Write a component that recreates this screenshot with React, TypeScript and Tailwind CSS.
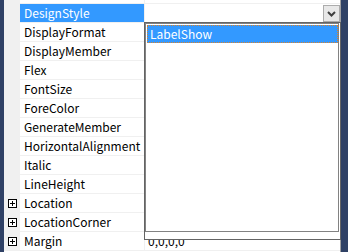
import React from 'react'

type Prop = { name: string; value?: string; expandable?: boolean; selected?: boolean; dropdown?: boolean }

// first row is scrolled almost fully out of view; only its bottom line shows
const props: Prop[] = [
  { name: '' },
  { name: 'DesignStyle', selected: true, dropdown: true },
  { name: 'DisplayFormat' },
  { name: 'DisplayMember' },
  { name: 'Flex' },
  { name: 'FontSize' },
  { name: 'ForeColor' },
  { name: 'GenerateMember' },
  { name: 'HorizontalAlignment' },
  { name: 'Italic' },
  { name: 'LineHeight' },
  { name: 'Location', expandable: true },
  { name: 'LocationCorner', expandable: true },
  { name: 'Margin', expandable: true, value: '0,0,0,0' },
]

function PlusBox() {
  return (
    <svg width="9" height="9" viewBox="0 0 9 9" className="ml-[4px]" shapeRendering="crispEdges">
      <rect x="0.5" y="0.5" width="8" height="8" fill="#ffffff" stroke="#000000" />
      <line x1="2" y1="4.5" x2="7" y2="4.5" stroke="#000000" />
      <line x1="4.5" y1="2" x2="4.5" y2="7" stroke="#000000" />
    </svg>
  )
}

function DropButton() {
  return (
    <div className="mt-[1px] flex h-[17px] w-[17px] items-center justify-center border border-[#acacac] bg-[#e8e8e8]">
      <svg width="9" height="6" viewBox="0 0 9 6">
        <polyline points="1,1 4.5,4.5 8,1" fill="none" stroke="#404040" strokeWidth="2" />
      </svg>
    </div>
  )
}

function Row({ p }: { p: Prop }) {
  return (
    <div className="flex h-[19px]">
      <div className="flex w-[16px] items-center bg-[#f0f0f0]">{p.expandable && <PlusBox />}</div>
      <div
        className={
          'w-[125px] border-b border-r border-[#f0f0f0] pl-[4px] leading-[18px] whitespace-nowrap overflow-hidden ' +
          (p.selected ? 'bg-[#3399ff] text-white' : 'text-black')
        }
      >
        {p.name}
      </div>
      <div className="flex flex-1 justify-end border-b border-[#f0f0f0]">
        {p.value && <div className="flex-1 pl-[3px] leading-[18px] text-black">{p.value}</div>}
        {p.dropdown && <DropButton />}
      </div>
    </div>
  )
}

export default function App() {
  return (
    <div
      className="relative flex h-[252px] w-[348px] overflow-hidden bg-[#2f4165] text-[12px]"
      style={{ fontFamily: '"Noto Sans CJK SC", "Noto Sans", sans-serif' }}
    >
      <div className="w-[4px]" />
      <div className="h-full w-[337px] overflow-hidden border-r border-[#a0a0a0] bg-white">
        <div className="-mt-[15px]">
          {props.map((p, i) => (
            <Row key={i} p={p} />
          ))}
        </div>
      </div>

      <div className="absolute left-[144px] top-[22px] h-[218px] w-[197px] border border-[#646464] bg-white pr-[1px]">
        <div className="h-[209px] border border-[#828282] bg-white">
          <div className="ml-[1px] mt-[1px] h-[18px] border border-dotted border-[#d9822b] bg-[#3399ff] pl-[2px] leading-[16px] text-white">
            LabelShow
          </div>
        </div>
      </div>
    </div>
  )
}
